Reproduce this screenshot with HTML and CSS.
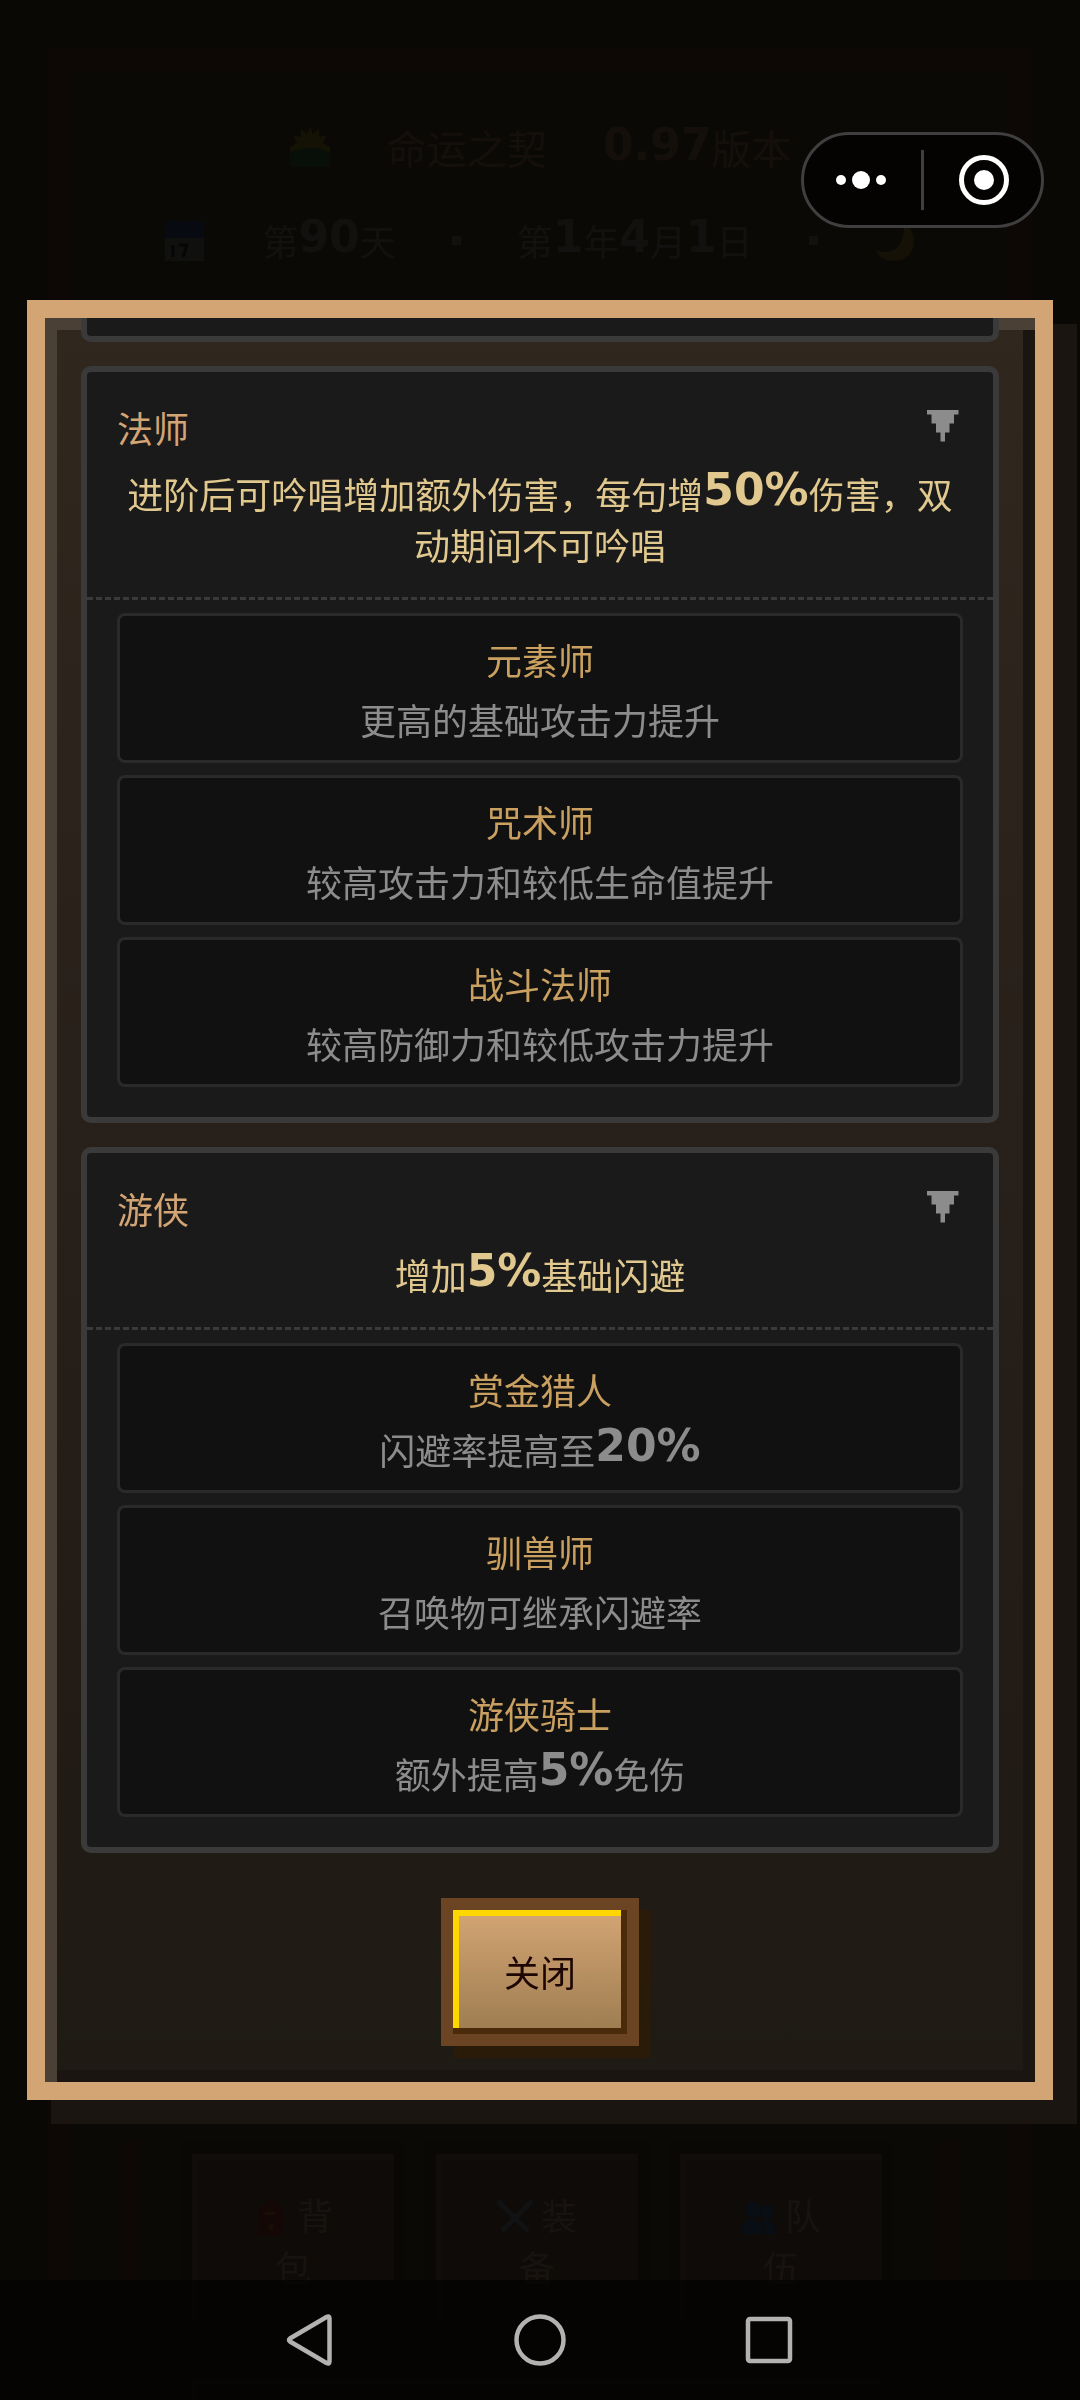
FILE: index.html
```html
<!DOCTYPE html>
<html lang="zh-CN">
<head>
<meta charset="utf-8">
<meta name="viewport" content="width=device-width, initial-scale=1">
<title>命运之契</title>
<link rel="stylesheet" href="styles.css">
</head>
<body>
<main class="scene">
  <section class="panel">
    <header class="status">
      <div class="status-row title-row">
        <svg class="emoji" viewBox="0 0 42 42" aria-hidden="true"><path fill="#141204" d="M21 0l3 7 6-5 0 8 8-2-4 8 7 4v10H1V20l7-4-4-8 8 2V2l6 5z"/><path fill="#080f09" d="M1 26q20-10 40 0v14H1z"/></svg>
        <span>命运之契</span>
        <span><b class="num">0.97</b>版本</span>
      </div>
      <div class="status-row">
        <svg class="emoji" viewBox="0 0 42 42" aria-hidden="true"><path fill="#070b11" d="M1 1h39v17H1z"/><path fill="#10110f" d="M1 18h39v23H1z"/><path fill="none" stroke="#060606" stroke-width="3" d="M9 25v12M15 25h8l-4 12"/></svg>
        <span>第<b class="num">90</b>天</span>
        <span class="dot"></span>
        <span>第<b class="num">1</b>年<b class="num">4</b>月<b class="num">1</b>日</span>
        <span class="dot"></span>
        <svg class="emoji" viewBox="0 0 42 42" aria-hidden="true"><path fill="#151106" d="M28 1C46 12 44 40 20 41 10 41 4 36 2 30 22 38 34 20 28 1z"/></svg>
      </div>
    </header>
    <div class="actions">
      <button class="action" type="button"><svg class="mini" viewBox="0 0 32 36" aria-hidden="true"><path fill="#140806" d="M3 12Q4 4 11 4q1-4 5-4t5 4q7 0 8 8v24H3z"/><path fill="#1b0e09" d="M10 12h10v3H10zM14 24h4v6h-4z"/></svg>背<br>包</button>
      <button class="action" type="button"><svg class="mini" viewBox="0 0 36 36" aria-hidden="true"><path fill="none" stroke="#101214" stroke-width="5" d="M1 1l30 30M35 1L5 31"/></svg>装<br>备</button>
      <button class="action" type="button"><svg class="mini" viewBox="0 0 36 36" aria-hidden="true"><g fill="#090d14"><circle cx="12" cy="10" r="8"/><circle cx="26" cy="12" r="7"/><path d="M0 34q0-15 12-15t12 15zM22 20q13-2 13 14H26z"/></g></svg>队<br>伍</button>
      <div class="action wide"></div>
    </div>
  </section>
</main>

<section class="dialog" role="dialog" aria-label="职业">
  <div class="card clipped"></div>

  <article class="card">
    <div class="card-head">
      <div class="card-top">
        <h2>法师</h2>
        <button class="toggle" type="button" aria-label="收起法师"><svg viewBox="0 0 8 8"><path d="M0 0h7v1H6v2H5v2H4v2H3V5H2V3H1V1H0z"/></svg></button>
      </div>
      <p class="desc">进阶后可吟唱增加额外伤害，每句增<b class="num">50%</b>伤害，双动期间不可吟唱</p>
    </div>
    <ul class="options">
      <li><h3>元素师</h3><p>更高的基础攻击力提升</p></li>
      <li><h3>咒术师</h3><p>较高攻击力和较低生命值提升</p></li>
      <li><h3>战斗法师</h3><p>较高防御力和较低攻击力提升</p></li>
    </ul>
  </article>

  <article class="card">
    <div class="card-head">
      <div class="card-top">
        <h2>游侠</h2>
        <button class="toggle" type="button" aria-label="收起游侠"><svg viewBox="0 0 8 8"><path d="M0 0h7v1H6v2H5v2H4v2H3V5H2V3H1V1H0z"/></svg></button>
      </div>
      <p class="desc">增加<b class="num">5%</b>基础闪避</p>
    </div>
    <ul class="options">
      <li><h3>赏金猎人</h3><p>闪避率提高至<b class="num">20%</b></p></li>
      <li><h3>驯兽师</h3><p>召唤物可继承闪避率</p></li>
      <li><h3>游侠骑士</h3><p>额外提高<b class="num">5%</b>免伤</p></li>
    </ul>
  </article>

  <button class="close" type="button">关闭</button>
</section>

<div class="capsule">
  <button type="button" aria-label="更多"><svg width="50" height="50" viewBox="0 0 50 50"><g fill="#fff"><circle cx="5" cy="25" r="5"/><circle cx="25" cy="25" r="9"/><circle cx="45" cy="25" r="5"/></g></svg></button>
  <span class="divider"></span>
  <button type="button" aria-label="退出"><svg width="50" height="50" viewBox="0 0 50 50"><circle cx="25" cy="25" r="22.5" fill="none" stroke="#fff" stroke-width="5"/><circle cx="25" cy="25" r="10" fill="#fff"/></svg></button>
</div>

<nav class="navbar" aria-label="系统导航">
  <button type="button" aria-label="返回"><svg width="52" height="52" viewBox="0 0 52 52"><path d="M45.500 4.500v43q0 3-3 1.500L6 27.500q-2-1.500 0-3L42.500 3q3-1.500 3 1.500z"/></svg></button>
  <button type="button" aria-label="主页"><svg width="52" height="52" viewBox="0 0 52 52"><circle cx="26" cy="26" r="23.500"/></svg></button>
  <button type="button" aria-label="最近任务"><svg width="52" height="52" viewBox="0 0 52 52"><rect x="4" y="5" width="42" height="42" rx="2"/></svg></button>
</nav>
</body>
</html>
```
FILE: styles.css
```css
* {
  box-sizing: border-box;
}

body {
  margin: 0;
  background: #090805;
  color: #8c8c8c;
  font: 36px/51px "Noto Sans CJK SC", sans-serif;
}

h2, h3, p, ul {
  margin: 0;
  padding: 0;
  font-size: inherit;
  font-weight: 400;
}

button {
  padding: 0;
  border: 0;
  background: none;
  color: inherit;
  font: inherit;
}

svg {
  display: block;
}

/* digits sit a little above the Chinese baseline */
.num {
  font: 700 44px/0 "DejaVu Sans", sans-serif;
  vertical-align: 4px;
}

/* dimmed game screen behind the dialog */
.scene {
  height: 100vh;
  padding: 48px 48px 0;
  overflow: hidden;
}

.panel {
  display: flex;
  flex-direction: column;
  justify-content: space-between;
  height: 100%;
  border: 24px solid #0d0805;
  border-bottom: 0;
  background: #0a0906;
}

.status {
  display: flex;
  flex-direction: column;
  gap: 42px;
  padding-top: 50px;
  color: #13110f;
}

.status-row {
  display: flex;
  align-items: center;
  justify-content: center;
  gap: 56px;
}

.title-row {
  color: #150f0c;
  font-size: 40px;
}

.emoji {
  width: 42px;
  height: 42px;
}

.dot {
  width: 9px;
  height: 9px;
  background: #13110f;
}

.actions {
  display: grid;
  grid-template-columns: repeat(3, 1fr);
  gap: 32px 18px;
  margin: 0 48px;
  padding: 0 46px 0 40px;
  border: solid #0d0805;
  border-width: 0 20px;
}

.action {
  height: 192px;
  padding-top: 4px;
  border: 12px solid #0a0805;
  background: #0f0b08;
  box-shadow: inset 6px 6px #110d0a;
  color: #171310;
  line-height: 52px;
}

.action.wide {
  grid-column: 1 / -1;
  height: 34px;
  border-bottom: 0;
}

.mini {
  display: inline-block;
  width: 36px;
  height: 36px;
  margin-right: 8px;
  vertical-align: -6px;
}

/* dialog, scrolled to its end */
.dialog {
  position: fixed;
  top: 12.5vh;
  right: 27px;
  left: 27px;
  display: flex;
  flex-direction: column;
  justify-content: flex-end;
  height: 75vh;
  padding: 0 36px 36px;
  overflow: hidden;
  border: 18px solid #d4a574;
  background: linear-gradient(#30281e, #2a211b 35%, #231c16 75%, #1e1a14);
  box-shadow: inset 12px 12px #4a4035, inset -12px -12px #1a1510, 24px 24px #1a1510;
}

.card {
  flex: none;
  margin-bottom: 24px;
  border: 6px solid #3a3a3a;
  border-radius: 10px;
  background: #1a1a1a;
}

.card.clipped {
  height: 120px;
}

.card-head {
  padding: 30px 30px 27px;
  border-bottom: 3px dashed #3a3a3a;
}

.card-top {
  display: flex;
  align-items: center;
  justify-content: space-between;
  margin-bottom: 15px;
  color: #d4a574;
}

.toggle svg {
  width: 36px;
  height: 36px;
  fill: #8c8c8c;
}

.desc {
  color: #e0c88e;
  text-align: center;
}

.options {
  display: grid;
  gap: 12px;
  padding: 13px 30px 30px;
  list-style: none;
  text-align: center;
}

.options li {
  display: grid;
  gap: 9px;
  padding: 18px 18px 15px;
  border: 3px solid #2a2a2a;
  border-radius: 8px;
  background: #111;
}

.options h3 {
  color: #c9a05f;
}

.close {
  flex: none;
  align-self: center;
  margin-top: 21px;
  padding: 36px 51px 37px;
  border: 12px solid #6b4423;
  background: linear-gradient(#d4a574, #9c7c50);
  box-shadow: inset -6px -6px #4a2a0a, inset 6px 6px #ffd700, 12px 12px #2a1a08;
  color: #1e0604;
}

/* mini-program capsule */
.capsule {
  position: fixed;
  top: 132px;
  right: 36px;
  display: grid;
  grid-template-columns: 1fr 3px 1fr;
  align-items: center;
  width: 243px;
  height: 96px;
  border: 3px solid #3f3f3f;
  border-radius: 48px;
  background: #040302;
}

.capsule button {
  display: grid;
  place-items: center;
}

.capsule button:first-child {
  padding-right: 3px;
}

.capsule button:last-child {
  padding-left: 3px;
}

.divider {
  height: 60px;
  background: #3f3f3f;
}

.navbar {
  position: fixed;
  right: 0;
  bottom: 0;
  left: 0;
  display: flex;
  align-items: center;
  justify-content: center;
  gap: 178px;
  height: 120px;
  background: rgba(4, 3, 2, 0.75);
}

.navbar svg {
  fill: none;
  stroke: #b3b2b0;
  stroke-width: 4.5;
}
```
